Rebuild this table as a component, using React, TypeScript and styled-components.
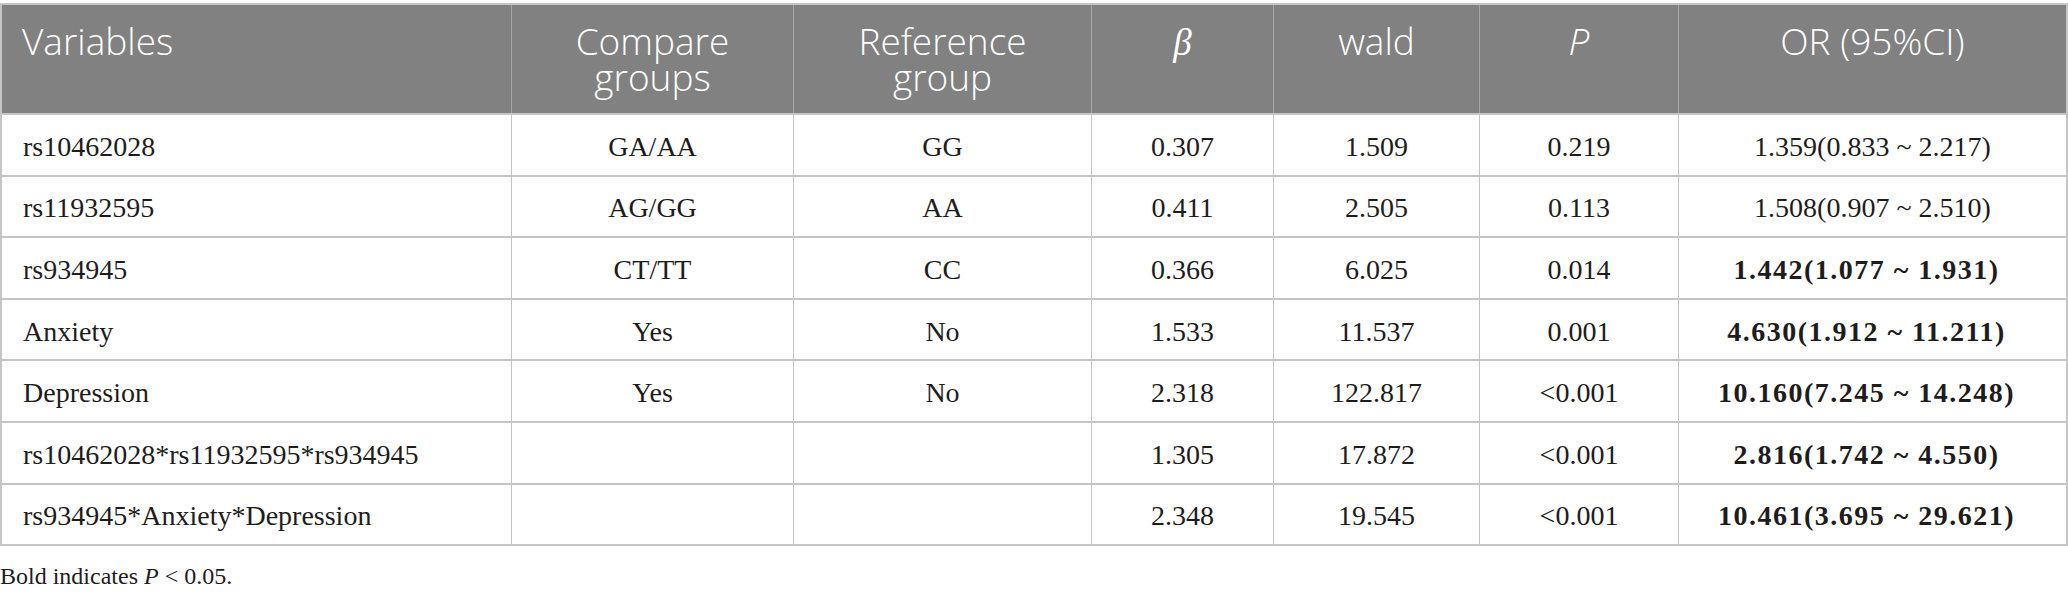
import React from "react";
import styled, { createGlobalStyle } from "styled-components";

const GlobalStyle = createGlobalStyle`
  html, body { margin: 0; padding: 0; background: #ffffff; }
  body { font-family: "Liberation Serif", "Times New Roman", serif; }
`;

const COLS = "510px 282px 298px 182px 206px 199px 1fr";

const Page = styled.div`
  padding-top: 3px;
  width: 2068px;
`;

const Table = styled.div`
  box-sizing: border-box;
  width: 2068px;
  border: 2px solid #c5c5c5;
`;

const HeadRow = styled.div`
  display: grid;
  grid-template-columns: ${COLS};
  height: 108px;
  background: #808180;
  border-bottom: 2px solid #c5c5c5;
`;

const HeadCell = styled.div<{ $left?: boolean; $last?: boolean }>`
  box-sizing: border-box;
  display: flex;
  flex-direction: column;
  align-items: ${(p) => (p.$left ? "flex-start" : "center")};
  padding-top: 18px;
  padding-left: ${(p) => (p.$left ? "20px" : "0")};
  border-right: ${(p) => (p.$last ? "none" : "1px solid #a6a7a6")};
  color: #ffffff;
  font-family: "Open Sans", "Noto Sans", sans-serif;
  font-weight: 300;
  font-size: 37px;
  line-height: 36px;
`;

const HeadLine = styled.span`
  display: block;
  white-space: nowrap;
`;

const SerifItalic = styled.span`
  font-family: "Liberation Serif", serif;
  font-style: italic;
`;

const SansItalic = styled.span`
  font-style: italic;
`;

const Row = styled.div<{ $last?: boolean }>`
  display: grid;
  grid-template-columns: ${COLS};
  height: 59.6px;
  border-bottom: ${(p) => (p.$last ? "none" : "2px solid #c5c5c5")};
`;

const Cell = styled.div<{ $left?: boolean; $last?: boolean; $bold?: boolean }>`
  box-sizing: border-box;
  display: flex;
  align-items: center;
  justify-content: ${(p) => (p.$left ? "flex-start" : "center")};
  padding-left: ${(p) => (p.$left ? "21px" : "0")};
  padding-right: ${(p) => (p.$bold ? "12px" : "0")};
  padding-top: 4px;
  border-right: ${(p) => (p.$last ? "none" : "1px solid #c5c5c5")};
  color: #1e1c1d;
  font-family: "Liberation Serif", "Times New Roman", serif;
  font-size: 28px;
  font-weight: ${(p) => (p.$bold ? 700 : 400)};
  letter-spacing: ${(p) => (p.$bold ? "1.5px" : "0")};
  white-space: nowrap;
`;

const Footnote = styled.p`
  margin: 17px 0 0;
  font-family: "Liberation Serif", "Times New Roman", serif;
  font-size: 24px;
  color: #1e1c1d;
`;

type RowData = {
  v: string;
  c: string;
  r: string;
  b: string;
  w: string;
  p: string;
  or: string;
  bold: boolean;
};

const rows: RowData[] = [
  { v: "rs10462028", c: "GA/AA", r: "GG", b: "0.307", w: "1.509", p: "0.219", or: "1.359(0.833 ~ 2.217)", bold: false },
  { v: "rs11932595", c: "AG/GG", r: "AA", b: "0.411", w: "2.505", p: "0.113", or: "1.508(0.907 ~ 2.510)", bold: false },
  { v: "rs934945", c: "CT/TT", r: "CC", b: "0.366", w: "6.025", p: "0.014", or: "1.442(1.077 ~ 1.931)", bold: true },
  { v: "Anxiety", c: "Yes", r: "No", b: "1.533", w: "11.537", p: "0.001", or: "4.630(1.912 ~ 11.211)", bold: true },
  { v: "Depression", c: "Yes", r: "No", b: "2.318", w: "122.817", p: "<0.001", or: "10.160(7.245 ~ 14.248)", bold: true },
  { v: "rs10462028*rs11932595*rs934945", c: "", r: "", b: "1.305", w: "17.872", p: "<0.001", or: "2.816(1.742 ~ 4.550)", bold: true },
  { v: "rs934945*Anxiety*Depression", c: "", r: "", b: "2.348", w: "19.545", p: "<0.001", or: "10.461(3.695 ~ 29.621)", bold: true },
];

export default function App() {
  return (
    <Page>
      <GlobalStyle />
      <Table>
        <HeadRow>
          <HeadCell $left>
            <HeadLine>Variables</HeadLine>
          </HeadCell>
          <HeadCell>
            <HeadLine>Compare</HeadLine>
            <HeadLine>groups</HeadLine>
          </HeadCell>
          <HeadCell>
            <HeadLine>Reference</HeadLine>
            <HeadLine>group</HeadLine>
          </HeadCell>
          <HeadCell>
            <HeadLine>
              <SerifItalic>β</SerifItalic>
            </HeadLine>
          </HeadCell>
          <HeadCell>
            <HeadLine>wald</HeadLine>
          </HeadCell>
          <HeadCell>
            <HeadLine>
              <SansItalic>P</SansItalic>
            </HeadLine>
          </HeadCell>
          <HeadCell $last>
            <HeadLine>OR (95%CI)</HeadLine>
          </HeadCell>
        </HeadRow>
        {rows.map((r, i) => (
          <Row key={r.v} $last={i === rows.length - 1}>
            <Cell $left>{r.v}</Cell>
            <Cell>{r.c}</Cell>
            <Cell>{r.r}</Cell>
            <Cell>{r.b}</Cell>
            <Cell>{r.w}</Cell>
            <Cell>{r.p}</Cell>
            <Cell $last $bold={r.bold}>
              {r.or}
            </Cell>
          </Row>
        ))}
      </Table>
      <Footnote>
        Bold indicates <SerifItalic>P</SerifItalic> &lt; 0.05.
      </Footnote>
    </Page>
  );
}
